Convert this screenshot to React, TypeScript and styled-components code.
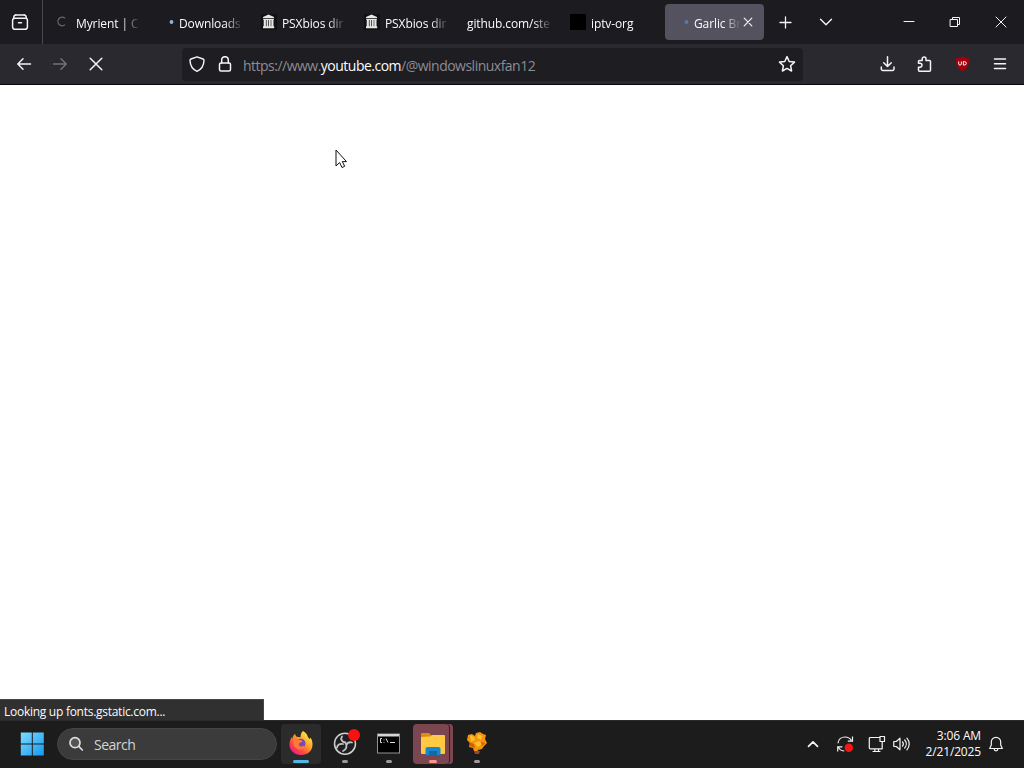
import React from 'react'
import styled, { createGlobalStyle } from "styled-components"

interface ITab {
    label: string
    icon?: "spinner" | "dot" | "archive" | "square"
    active?: boolean
}

const tabs: ITab[] = [
    { label: "Myrient | C", icon: "spinner" },
    { label: "Downloads", icon: "dot" },
    { label: "PSXbios dir", icon: "archive" },
    { label: "PSXbios dir", icon: "archive" },
    { label: "github.com/ste" },
    { label: "iptv-org", icon: "square" },
    { label: "Garlic Br", icon: "dot", active: true },
]

function TabIcon({ icon, active }: { icon: ITab["icon"], active?: boolean }) {
    return (
        <svg width="16" height="16" viewBox="0 0 16 16" fill="none">
            {icon === "spinner" && <path d="M10 4.2A4.3 4.3 0 1 0 10 10.8" stroke="#66666b" strokeWidth="1.3" />}
            {icon === "dot" && <circle cx="13.5" cy="8" r="1.9" fill={active ? "#4a7eb8" : "#8db4d8"} />}
            {icon === "square" && <rect width="16" height="16" fill="#000" />}
            {icon === "archive" && (
                <>
                    <rect width="16" height="16" fill="#111113" />
                    <path d="M7.500 .5l5.500 2.500v1.200H2V3zM2.300 5h10.500v1H2.300zM2.700 6h2.200v6.500H2.700zM5.600 6h1.700v6.500H5.600zM8 6h1.700v6.500H8zM10.300 6h2.200v6.500h-2.200zM2 12.300h11.200v1.900H2z" fill="#e6e6e6" />
                </>
            )}
        </svg>
    )
}

function TabStrip() {
    return (
        <Strip>
            <ViewButton>
                <Glyph width="18" height="18" viewBox="0 0 18 18">
                    <path d="M4.800 2h8.400M3.600 5.300h10.800a2 2 0 0 1 2 2v6.700a2.300 2.300 0 0 1-2.300 2.300H3.900a2.300 2.300 0 0 1-2.300-2.300V7.300a2 2 0 0 1 2-2zM7.500 9.800h3" />
                    <path d="M2.700 4.500C2.900 3 3.500 2 4.800 2M15.300 4.500C15.100 3 14.500 2 13.200 2" />
                </Glyph>
            </ViewButton>
            <Tabs>
                {tabs.map((tab, i) => (
                    <Tab key={i} $active={tab.active}>
                        {tab.icon && <TabIcon icon={tab.icon} active={tab.active} />}
                        <TabLabel>{tab.label}</TabLabel>
                        {tab.active && (
                            <Glyph width="12" height="12" viewBox="0 0 12 12" $weight={1.2}>
                                <path d="M2.200 2.200l7.600 7.600M9.800 2.200l-7.600 7.600" />
                            </Glyph>
                        )}
                    </Tab>
                ))}
            </Tabs>
            <StripButton $width={43}>
                <Glyph width="14" height="14" viewBox="0 0 14 14" $weight={1.3}><path d="M6.500 2v11M1 7.500h11" /></Glyph>
            </StripButton>
            <StripButton $width={38}>
                <Glyph width="14" height="14" viewBox="0 0 14 14" $weight={1.4}><path d="M1.500 4.300L7 9.800l5.500-5.500" /></Glyph>
            </StripButton>
            <WindowButtons>
                <StripButton $width={46}>
                    <Glyph width="12" height="12" viewBox="0 0 12 12" $weight={1}><path d="M1 5.500h10" /></Glyph>
                </StripButton>
                <StripButton $width={46}>
                    <Glyph width="12" height="12" viewBox="0 0 12 12" $weight={1}><path d="M1.500 3.500h7v7h-7zM3.500 3.500v-2h7v7h-2" /></Glyph>
                </StripButton>
                <StripButton $width={46}>
                    <Glyph width="12" height="12" viewBox="0 0 12 12" $weight={1}><path d="M1 1l10 10M11 1L1 11" /></Glyph>
                </StripButton>
            </WindowButtons>
        </Strip>
    )
}

function Toolbar() {
    return (
        <Nav>
            <NavButtons>
                <Glyph width="16" height="16" viewBox="0 0 16 16"><path d="M14.500 8H2M7 2.800L1.800 8 7 13.200" /></Glyph>
                <Glyph width="16" height="16" viewBox="0 0 16 16" $color="#717177"><path d="M1.500 8H14M9 2.800L14.200 8 9 13.200" /></Glyph>
                <Glyph width="16" height="16" viewBox="0 0 16 16"><path d="M2.200 2.200l11.600 11.600M13.800 2.200L2.200 13.800" /></Glyph>
            </NavButtons>
            <UrlBar>
                <Glyph width="16" height="16" viewBox="0 0 16 16" $weight={1.4}>
                    <path d="M8 .8l6 2.200c.8.3 1 .7 1 1.400-.2 5-2.400 9-7 10.900C3.400 13.400 1.200 9.400 1 4.400 1 3.700 1.200 3.300 2 3z" />
                </Glyph>
                <Glyph width="16" height="16" viewBox="0 0 16 16" $weight={1.5}>
                    <rect x="2.500" y="7" width="11" height="8" rx="1.500" />
                    <path d="M4.700 7V4a3.300 3.300 0 0 1 6.600 0v3" />
                </Glyph>
                <Url>https://www.<b>youtube.com</b>/@windowslinuxfan12</Url>
                <Glyph width="18" height="18" viewBox="0 0 18 18">
                    <path d="M9 1.600l2.200 4.900 5.300.6-3.900 3.600 1 5.300L9 13.400 4.400 16l1-5.300L1.500 7.100l5.300-.6z" />
                </Glyph>
            </UrlBar>
            <Actions>
                <Glyph width="16" height="16" viewBox="0 0 16 16"><path d="M7.500 .8v9.700M3.700 6.700l3.800 3.800 3.800-3.800M1.300 11v1.900a1.500 1.500 0 0 0 1.500 1.500h9.700a1.500 1.500 0 0 0 1.500-1.500V11" /></Glyph>
                <Glyph width="16" height="16" viewBox="0 0 16 16">
                    <path d="M1.500 7.300V5.500a1 1 0 0 1 1-1H5.200V2.900a1.900 1.900 0 0 1 3.800 0v1.600h3.500a1 1 0 0 1 1 1v8.700a1 1 0 0 1-1 1h-10a1 1 0 0 1-1-1v-3H3a1.900 1.900 0 0 0 0-3.900z" />
                </Glyph>
                <svg width="16" height="16" viewBox="0 0 16 16">
                    <path d="M7.500 .5c1.800 1.200 4 1.800 6.500 1.800.2 6-1.100 10.200-6.500 13.200C2.100 12.500.8 8.300 1 2.300c2.500 0 4.700-.6 6.500-1.800z" fill="#a5000c" />
                    <path d="M3.700 5.500v2.300c0 .9.6 1.300 1.300 1.300s1.300-.4 1.300-1.300V5.500M8.300 9V5.700h1.300a1.600 1.600 0 0 1 0 3.300z" fill="none" stroke="#fff" />
                </svg>
                <Glyph width="16" height="16" viewBox="0 0 16 16"><path d="M2.500 3h11M2.500 7.800h11M2.500 12.600h11" /></Glyph>
            </Actions>
        </Nav>
    )
}

function Pointer() {
    return (
        <PointerIcon width="13" height="20" viewBox="0 0 13 20">
            <path d="M1 1v16l3.600-3.500L7 18.500l2.700-1.200-2.400-4.700h4.200z" fill="#fff" stroke="#111118" />
        </PointerIcon>
    )
}

function Taskbar() {
    return (
        <Bar>
            <svg width="24" height="24" viewBox="0 0 24 24">
                <defs>
                    <linearGradient id="win" x1="0" y1="0" x2="1" y2="1">
                        <stop offset="0" stopColor="#7ddcff" />
                        <stop offset="1" stopColor="#1598ef" />
                    </linearGradient>
                </defs>
                <path d="M.8.5h11v11h-11zM12.800.5h11v11h-11zM.8 12.500h11v11h-11zM12.800 12.500h11v11h-11z" fill="url(#win)" />
            </svg>
            <SearchBox>
                <Glyph width="16" height="16" viewBox="0 0 16 16" $weight={1.7} $color="#dedede">
                    <circle cx="6" cy="6.700" r="5" fill="#555" />
                    <path d="M10 10.700l3.300 3.300" />
                </Glyph>
                Search
            </SearchBox>
            <Apps>
                <AppButton $fill="#2b2b2b" $line="#51b8e5" $lineWidth={16}>
                    <svg width="26" height="26" viewBox="0 0 26 26">
                        <defs>
                            <linearGradient id="fox" x1=".85" y1=".1" x2=".2" y2=".9">
                                <stop offset="0" stopColor="#fff04a" />
                                <stop offset=".4" stopColor="#ffa32b" />
                                <stop offset=".75" stopColor="#ff4a3e" />
                                <stop offset="1" stopColor="#ec2281" />
                            </linearGradient>
                        </defs>
                        <path d="M15 0c3.200 1.700 4.600 4.200 5 6.200.9.500 1.500 1.200 1.800 2.200l.4-1.800C24 8.500 24.500 11 24.500 13.700 24.500 20 19.500 24 13 24S1.500 19.500 1.500 13.500c0-3.300 1-5.800 2.500-7.600l.2 2.100C4.700 5.500 5.700 4 7.200 2.800c0 1.400.6 2.300 1.600 2.900l3.700.5C12.500 3.800 13.200 1.600 15 0z" fill="url(#fox)" />
                        <circle cx="12.700" cy="12.500" r="4.800" fill="#7548c5" />
                        <path d="M5.500 8.300c2.300-1.200 4.700-.7 6.300.8 1.500 0 2.400.4 2.500 1.200-.2 1-2.600 1.500-3.400 2.500-.6 2.300 1.600 3.200 3.600 2.500 1.200-.4 2-.2 2.300.5-1.600 2.400-4.800 3.300-7.600 2C5.600 16.100 4.600 11.800 5.500 8.300z" fill="#ff7a35" />
                    </svg>
                </AppButton>
                <AppButton>
                    <svg width="26" height="26" viewBox="0 0 26 26" fill="none">
                        <circle cx="13" cy="12.700" r="10.500" fill="#1f1f21" stroke="#d0d0d0" strokeWidth="1.500" />
                        <path d="M10 5.500c-2 3 .2 5.700 3.500 6M20 11.500c-3.300-1-6 1-5.700 4.300M11 13c-3.300-.8-5.600 1-6 3.500M13.500 12c2 2.800 1 6.500-2.500 8" stroke="#c4c4c4" strokeWidth="1.800" strokeLinecap="round" />
                    </svg>
                    <RecordDot />
                </AppButton>
                <AppButton>
                    <svg width="24" height="24" viewBox="0 0 24 24">
                        <rect x=".5" y="2" width="22" height="19" fill="#000" stroke="#929292" />
                        <path d="M1 2h21v2.500H1z" fill="#d5d5d5" />
                        <path d="M5 6.500H3.500v4H5M7 7.500v.8M7 10v.8M9 6.500l2 4M13 10.500h5" fill="none" stroke="#ddd" />
                    </svg>
                </AppButton>
                <AppButton $fill="#7c4650" $line="#ff9683" $lineWidth={8} $stacked>
                    <svg width="26" height="24" viewBox="0 0 26 24">
                        <path d="M1 2a1 1 0 0 1 1-1h7l2 2v3H1z" fill="#dc8c13" />
                        <path d="M1 5l9-.5L12 3h12a1 1 0 0 1 1 1v17a1 1 0 0 1-1 1H2a1 1 0 0 1-1-1z" fill="#ffc944" />
                        <path d="M5.500 23v-6a2 2 0 0 1 2-2h11a2 2 0 0 1 2 2v6z" fill="#1687cf" />
                        <path d="M9 19h8v4H9z" fill="#1269a4" />
                    </svg>
                </AppButton>
                <AppButton>
                    <svg width="22" height="26" viewBox="0 0 22 26">
                        <path d="M2 4l4-1 3 2 1-3 4-1 3 2 3 1-1 4 2 4-3 3-2 3-4 1-1 2-3-1-1-3-4-1 1-4-3-3z" fill="#f6920c" />
                        <path d="M4 4l4 2 1 3-4 2zM12 3l4 2-1 4-4-2zM8 12l5-2 3 3-4 3z" fill="#ffc12f" />
                        <path d="M3 11l5 2 1 4-5-2zM15 11l4 1-3 3z" fill="#d55c07" />
                        <path d="M8 20h6l-1 3H9z" fill="#8f4d2c" />
                    </svg>
                </AppButton>
            </Apps>
            <Tray>
                <Glyph width="14" height="14" viewBox="0 0 14 14" $weight={1.7}><path d="M2.500 9.300L7 4.800l4.500 4.500" /></Glyph>
                <Sync width="18" height="18" viewBox="0 0 18 18" fill="none">
                    <path d="M2 8.300C2.300 4.500 5.200 2 9 2c2.800 0 5 1.200 6.300 3.400M16.500 1.500v4.700h-4.700M1.700 16.500v-4.700h4.700M2.500 12.500C4 15 6 16 8.300 16" stroke="#f0f0f0" strokeWidth="1.200" />
                    <circle cx="12.800" cy="12.700" r="4.200" fill="#f51616" />
                </Sync>
                <Glyph width="18" height="18" viewBox="0 0 18 18" $weight={1.2}>
                    <path d="M11 2.500H2.300a1 1 0 0 0-1 1v9.300a1 1 0 0 0 1 1H14.200V6.500M5 16.500h7M6.800 14v2.500M10.500 14v2.500M12 1.500h4.500v5H12z" />
                </Glyph>
                <Glyph width="18" height="18" viewBox="0 0 18 18" $weight={1.2}>
                    <path d="M.8 6.500h2.500L7 3.200v11.600l-3.700-3.300H.8zM9.500 6.800a3.500 3.500 0 0 1 0 4.400M11.700 5a6 6 0 0 1 0 8M13.900 3.200a8.500 8.500 0 0 1 0 11.600" />
                </Glyph>
            </Tray>
            <Clock>
                <span>3:06 AM</span>
                <span>2/21/2025</span>
            </Clock>
            <Glyph width="16" height="16" viewBox="0 0 16 16" $weight={1.2}>
                <path d="M8 1.300a4.700 4.700 0 0 0-4.700 4.700v3L1.700 12.500h12.600L12.700 9V6A4.700 4.700 0 0 0 8 1.300zM6.200 13a1.800 1.800 0 0 0 3.600 0" />
            </Glyph>
        </Bar>
    )
}

function App() {
    return (
        <Screen>
            <GlobalStyle />
            <TabStrip />
            <Toolbar />
            <Page>
                <Pointer />
                <Status>Looking up fonts.gstatic.com...</Status>
            </Page>
            <Taskbar />
        </Screen>
    )
}

export default App

const GlobalStyle = createGlobalStyle`
    * {
        box-sizing: border-box;
    }
    body {
        margin: 0;
        overflow: hidden;
        font-family: "Open Sans", "Noto Sans", sans-serif;
    }
    svg {
        display: block;
        flex-shrink: 0;
    }
`

const Screen = styled.div`
    display: flex;
    flex-direction: column;
    width: 1024px;
    height: 768px;
    background-color: #fff;
    color: #fbfbfe;
`

const Glyph = styled.svg<{ $color?: string, $weight?: number }>`
    fill: none;
    stroke: ${({ $color }) => $color || "#f4f4f6"};
    stroke-width: ${({ $weight }) => $weight || 1.5};
    stroke-linecap: round;
    stroke-linejoin: round;
`

const Strip = styled.div`
    display: flex;
    align-items: center;
    height: 44px;
    background-color: #1c1b20;
`

const ViewButton = styled.div`
    display: flex;
    align-items: center;
    width: 43px;
    height: 44px;
    padding-left: 11px;
    border-right: 1px solid #4a4a4f;
`

const Tabs = styled.div`
    display: flex;
    gap: 4px;
    margin-left: 4px;
`

const Tab = styled.div<{ $active?: boolean }>`
    display: flex;
    align-items: center;
    gap: ${({ $active }) => $active ? 1 : 5}px;
    width: 99px;
    height: 36px;
    padding: 0 ${({ $active }) => $active ? 10 : 6}px 0 8px;
    border-radius: 4px;
    background-color: ${({ $active }) => $active ? "#54525e" : "transparent"};

    svg + span {
        padding-left: ${({ $active }) => $active ? 4 : 0}px;
    }
`

const TabLabel = styled.span`
    flex: 1;
    min-width: 0;
    overflow: hidden;
    white-space: nowrap;
    padding-top: 3px;
    font-size: 12px;
    line-height: 20px;
    letter-spacing: -0.1px;
    mask-image: linear-gradient(to left, transparent, black 18px);
`

const StripButton = styled.div<{ $width: number }>`
    display: flex;
    align-items: center;
    justify-content: center;
    width: ${({ $width }) => $width}px;
    height: 44px;
`

const WindowButtons = styled.div`
    display: flex;
    margin-left: auto;
`

const Nav = styled.div`
    display: flex;
    align-items: center;
    height: 41px;
    background-color: #2a292f;
    border-bottom: 1px solid #08080a;
`

const NavButtons = styled.div`
    display: flex;
    gap: 20px;
    width: 182px;
    padding-left: 16px;
`

const UrlBar = styled.div`
    display: flex;
    align-items: center;
    gap: 12px;
    width: 621px;
    height: 33px;
    padding: 0 7px;
    border-radius: 4px;
    background-color: #1e1d22;
`

const Url = styled.span`
    flex: 1;
    margin-left: -2px;
    padding-top: 2px;
    font-size: 14px;
    letter-spacing: -0.51px;
    color: #8c8c92;

    b {
        font-weight: 400;
        color: #fbfbfe;
    }
`

const Actions = styled.div`
    display: flex;
    gap: 21.5px;
    margin-left: auto;
    padding-right: 16px;
`

const Page = styled.main`
    position: relative;
    display: flex;
    align-items: flex-end;
    flex: 1;
    background-color: #fff;
`

const PointerIcon = styled.svg`
    position: absolute;
    left: 334.5px;
    top: 63.5px;
`

const Status = styled.div`
    width: 264px;
    height: 21px;
    padding-left: 4px;
    border: solid #46464a;
    border-width: 1px 1px 0 0;
    background-color: #303030;
    font-size: 12px;
    line-height: 23px;
    letter-spacing: -0.27px;
`

const Bar = styled.footer`
    display: flex;
    align-items: center;
    height: 48px;
    padding: 0 0 1px 20px;
    border-top: 1px solid #292929;
    background-color: #1c1c1c;
`

const SearchBox = styled.div`
    display: flex;
    align-items: center;
    gap: 9px;
    width: 220px;
    height: 32px;
    margin-left: 13px;
    padding-left: 11px;
    border: 1px solid #454545;
    border-radius: 16px;
    background-color: #3b3b3b;
    font-size: 14px;
    letter-spacing: -0.5px;
    color: #d4d4d4;
`

const Apps = styled.div`
    display: flex;
    gap: 4px;
    margin-left: 4px;
`

const AppButton = styled.div<{ $fill?: string, $line?: string, $lineWidth?: number, $stacked?: boolean }>`
    position: relative;
    display: flex;
    align-items: center;
    justify-content: center;
    width: 40px;
    height: 40px;
    border-radius: 4px;
    background-color: ${({ $fill }) => $fill || "transparent"};
    box-shadow: ${({ $stacked }) => $stacked ? "inset -3px 0 #7c4650, inset -4px 0 #371f24" : "none"};

    &::after {
        content: "";
        position: absolute;
        bottom: 1px;
        left: 50%;
        width: ${({ $lineWidth }) => $lineWidth || 6}px;
        height: 3px;
        border-radius: 2px;
        transform: translateX(-50%);
        background-color: ${({ $line }) => $line || "#9b9b9b"};
    }
`

const RecordDot = styled.i`
    position: absolute;
    right: 5px;
    top: 5px;
    width: 12px;
    height: 12px;
    border-radius: 50%;
    background-color: #fa1010;
`

const Tray = styled.div`
    display: flex;
    align-items: center;
    gap: 7px;
    margin-left: auto;
`

const Sync = styled.svg`
    margin: 0 7px 0 9px;
`

const Clock = styled.div`
    display: flex;
    flex-direction: column;
    align-items: flex-end;
    width: 70px;
    margin-right: 7px;
    font-size: 12px;
    line-height: 16px;
    letter-spacing: -0.15px;

    & + svg {
        margin-right: 20px;
    }
`
